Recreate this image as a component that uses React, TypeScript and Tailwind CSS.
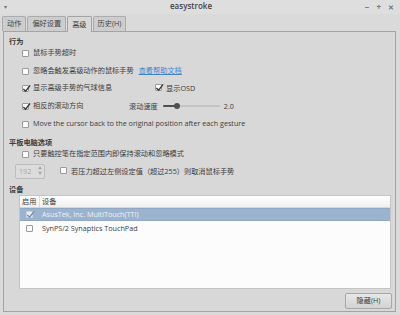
import { useState } from 'react';

const FONT = { fontFamily: '"Open Sans", "Noto Sans CJK SC", sans-serif' };

function Check({ checked = false, light = false }: { checked?: boolean; light?: boolean }) {
  return (
    <span
      className={`relative inline-flex w-[7px] h-[7px] shrink-0 rounded-[1px] border ${
        light ? 'border-[#c8d4e2] bg-[#e6ecf3]' : 'border-[#9a9a9a] bg-[#fbfbfb]'
      }`}
    >
      {checked && (
        <svg viewBox="0 0 10 10" className="absolute left-[-1px] top-[-2px] w-[9px] h-[9px]">
          <path
            d="M1.5 5.5 L4 8 L9 1.5"
            fill="none"
            stroke={light ? '#7d8fa6' : '#3a3a3a'}
            strokeWidth="1.6"
          />
        </svg>
      )}
    </span>
  );
}

function Row({ checked, children, className = '' }: { checked?: boolean; children: React.ReactNode; className?: string }) {
  return (
    <div className={`flex items-center h-[12px] ml-[13px] gap-[4px] ${className}`}>
      <Check checked={checked} />
      <span className="leading-none">{children}</span>
    </div>
  );
}

export default function App() {
  const [tab] = useState(2);
  const tabs = ['动作', '偏好设置', '高级', '历史(H)'];

  return (
    <div className="w-[400px] h-[315px] bg-[#dadada] text-[#3c3c3c] text-[7.2px] overflow-hidden" style={FONT}>
      {/* Title bar */}
      <div className="relative h-[14px] bg-[#dedede] flex items-center">
        <span className="ml-[4px] text-[6px] text-[#777]">▾</span>
        <span className="absolute left-[170px] top-[2px] text-[8px] font-semibold text-[#444] leading-none">easystroke</span>
        <div className="ml-auto mr-[6px] flex items-center gap-[7px] text-[#777] text-[8px] leading-none font-bold">
          <span>−</span>
          <span>+</span>
          <span className="text-[7px]">✕</span>
        </div>
      </div>

      {/* Tabs */}
      <div className="h-[16px] mt-[1px] flex items-end pl-[2px] gap-[1px]">
        {tabs.map((t, i) => (
          <div
            key={t}
            className={`px-[4px] flex items-center justify-center rounded-t-[2px] border border-b-0 leading-none ${
              i === tab
                ? 'h-[16px] bg-[#d8d8d8] border-[#a4a4a4] relative top-[1px] z-10'
                : 'h-[15px] bg-[#cdcdcd] border-[#acacac] text-[#444]'
            }`}
          >
            {t}
          </div>
        ))}
      </div>

      {/* Page */}
      <div className="ml-[3px] w-[393px] h-[281px] border border-[#a4a4a4] bg-[#d8d8d8] flex flex-col pl-[5px] pr-[4px] pt-[3px]">
        <div className="h-[12px] flex items-center font-bold">行为</div>
        <Row>鼠标手势超时</Row>
        <Row className="mt-[6px]">
          忽略会触发高级动作的鼠标手势
          <span className="ml-[5px] text-[#3f86d0] underline">查看帮助文档</span>
        </Row>
        <div className="flex items-center mt-[5px] h-[12px]">
          <div className="w-[146px] shrink-0">
            <Row checked>显示高级手势的气球信息</Row>
          </div>
          <div className="flex items-center gap-[4px]">
            <Check checked />
            <span>显示OSD</span>
          </div>
        </div>
        <div className="flex items-center mt-[6px] h-[12px]">
          <div className="w-[120px] shrink-0">
            <Row checked>相反的滚动方向</Row>
          </div>
          <span>滚动速度</span>
          <div className="relative ml-[5px] w-[57px] h-[6px] flex items-center">
            <div className="absolute left-0 right-0 h-[2px] bg-[#c4c4c4] rounded-full" />
            <div className="absolute left-0 w-[13px] h-[2px] bg-[#505050] rounded-full" />
            <div className="absolute left-[11px] w-[6px] h-[6px] rounded-full bg-[#505050]" />
          </div>
          <span className="ml-[4px]">2.0</span>
        </div>
        <Row className="mt-[6px]">Move the cursor back to the original position after each gesture</Row>

        <div className="h-[12px] mt-[6px] flex items-center font-bold">平板电脑选项</div>
        <Row>只要触控笔在指定范围内即保持滚动和忽略模式</Row>
        <div className="flex items-center mt-[3px] h-[16px]">
          <div className="ml-[6px] w-[30px] h-[15px] border border-[#bdbdbd] bg-[#dcdcdc] rounded-[2px] flex items-center">
            <span className="ml-[3px] text-[#a8a8a8]">192</span>
            <div className="ml-auto mr-[2px] flex flex-col items-center text-[4px] leading-[5px] text-[#a8a8a8]">
              <span>▲</span>
              <span>▼</span>
            </div>
          </div>
          <div className="ml-[15px] flex items-center gap-[4px]">
            <Check />
            <span>若压力超过左侧设定值（超过255）则取消鼠标手势</span>
          </div>
        </div>

        <div className="h-[12px] mt-[4px] flex items-center font-bold">设备</div>
        <div className="ml-[10px] h-[94px] bg-[#fcfcfc] border border-[#c4c4c4] flex flex-col">
          <div className="h-[12px] flex items-center bg-gradient-to-b from-[#ffffff] to-[#f0f0f0] border-b border-[#d8d8d8]">
            <span className="w-[19px] pl-[2px] shrink-0">启用</span>
            <span className="h-full border-l border-[#dcdcdc]" />
            <span className="ml-[2px]">设备</span>
          </div>
          <div className="h-[13px] flex items-center bg-[#9cb3cf] border-y border-[#8fa8c6] text-[#eef2f7]">
            <span className="w-[19px] shrink-0 flex justify-center">
              <Check checked light />
            </span>
            <span className="ml-[3px]">AsusTek, Inc. MultiTouch(TTI)</span>
          </div>
          <div className="h-[14px] flex items-center">
            <span className="w-[19px] shrink-0 flex justify-center">
              <Check />
            </span>
            <span className="ml-[3px]">SynPS/2 Synaptics TouchPad</span>
          </div>
        </div>

        <div className="flex justify-end mt-[4px] -mr-[1px]">
          <button className="w-[47px] h-[16px] rounded-[2px] border border-[#a8a8a8] bg-gradient-to-b from-[#e8e8e8] to-[#d2d2d2] text-[#3c3c3c] leading-none">
            隐藏(H)
          </button>
        </div>
      </div>
    </div>
  );
}
